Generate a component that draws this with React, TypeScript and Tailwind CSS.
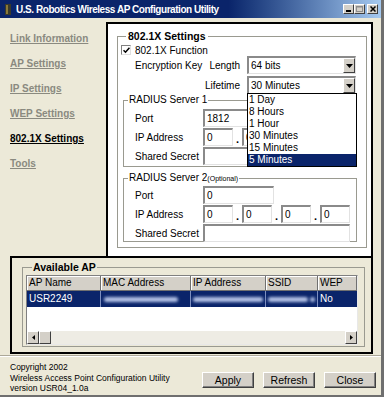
import type { ReactNode } from 'react';

const sans = "font-['Liberation_Sans',Arial,Helvetica,sans-serif]";

const navItems = [
  { label: 'Link Information', active: false },
  { label: 'AP Settings', active: false },
  { label: 'IP Settings', active: false },
  { label: 'WEP Settings', active: false },
  { label: '802.1X Settings', active: true },
  { label: 'Tools', active: false },
];

const lifetimes = ['1 Day', '8 Hours', '1 Hour', '30 Minutes', '15 Minutes', '5 Minutes'];

const columns = [
  { label: 'AP Name', w: 'w-[74px]' },
  { label: 'MAC Address', w: 'w-[90px]' },
  { label: 'IP Address', w: 'w-[75px]' },
  { label: 'SSID', w: 'w-[52px]' },
  { label: 'WEP', w: 'w-[39px]' },
];

function TextBox({ className = '', value = '' }: { className?: string; value?: string }) {
  return (
    <div
      className={`h-[18px] shrink-0 bg-white border-t-2 border-l-2 border-t-[#8a8a8a] border-l-[#8a8a8a] border-r border-b border-r-[#e2e2e2] border-b-[#e2e2e2] pl-[2px] text-[10px] leading-[15px] text-black ${className}`}
    >
      {value}
    </div>
  );
}

function IpBoxes() {
  return (
    <div className="flex">
      {[0, 1, 2, 3].map((i) => (
        <div key={i} className="flex">
          {i > 0 && (
            <span className="flex w-[9px] items-end justify-center text-[11px] font-bold leading-[14px]">.</span>
          )}
          <TextBox className="w-[30px]" value="0" />
        </div>
      ))}
    </div>
  );
}

function Combo({ value }: { value: string }) {
  return (
    <div className="flex h-[18px] w-[109px] bg-white border-t-2 border-l-2 border-t-[#8a8a8a] border-l-[#8a8a8a] border-r border-b border-r-[#e2e2e2] border-b-[#e2e2e2]">
      <span className="flex-1 pl-[2px] text-[10px] leading-[15px]">{value}</span>
      <span className="flex w-[12px] items-center justify-center bg-[#d4d0c8] border border-t-white border-l-white border-r-[#404040] border-b-[#404040]">
        <svg width="7" height="4" viewBox="0 0 7 4">
          <path d="M0 0h7L3.5 4z" fill="#000" />
        </svg>
      </span>
    </div>
  );
}

function Row({ label, children }: { label: string; children: ReactNode }) {
  return (
    <div className="flex h-[18px] items-center">
      <span className="w-[79px] shrink-0 pl-[11px] text-[10px]">{label}</span>
      {children}
    </div>
  );
}

function WinButton({ label }: { label: string }) {
  return (
    <button
      type="button"
      className="h-[16px] w-[52px] bg-[#d4d0c8] border border-t-white border-l-white border-r-[#404040] border-b-[#404040] shadow-[inset_-1px_-1px_0_#808080] text-[10.5px] leading-[13px] text-black"
    >
      {label}
    </button>
  );
}

function TitleButton({ children }: { children: ReactNode }) {
  return (
    <span className="flex h-[10px] w-[11px] items-center justify-center bg-[#d4d0c8] border border-t-white border-l-white border-r-[#404040] border-b-[#404040]">
      {children}
    </span>
  );
}

export default function App() {
  return (
    <div className={`${sans} flex h-[397px] w-[384px] flex-col overflow-hidden bg-[#ece9d8] border-r-[3px] border-b-[2px] border-r-[#6f6f6f] border-b-[#6f6f6f] text-black`}>
      {/* Title bar */}
      <div className="flex h-[18px] shrink-0 items-center bg-linear-to-r from-[#0a246a] via-[#0a246a] via-60% to-[#a6caf0] pl-[5px] pr-[3px]">
        <svg width="6" height="11" viewBox="0 0 6 11">
          <rect x="0" y="0" width="6" height="11" fill="#3a3a2a" />
          <rect x="1" y="1" width="2" height="9" fill="#8a7a3a" />
        </svg>
        <span className="ml-[5px] font-bold text-[10px] tracking-[-0.45px] text-white">
          U.S. Robotics Wireless AP Configuration Utility
        </span>
        <div className="ml-auto flex items-center">
          <TitleButton>
            <svg width="5" height="6" viewBox="0 0 5 6">
              <rect x="0" y="4" width="5" height="2" fill="#000" />
            </svg>
          </TitleButton>
          <TitleButton>
            <svg width="7" height="6" viewBox="0 0 7 6">
              <rect x="0.5" y="0.5" width="6" height="5" fill="none" stroke="#8c8c8c" />
              <rect x="0" y="0" width="7" height="1.5" fill="#8c8c8c" />
            </svg>
          </TitleButton>
          <span className="ml-[2px]">
            <TitleButton>
              <svg width="6" height="6" viewBox="0 0 6 6">
                <path d="M0.5 0.5l5 5M5.5 0.5l-5 5" stroke="#000" strokeWidth="1.5" />
              </svg>
            </TitleButton>
          </span>
        </div>
      </div>

      {/* Body */}
      <div className="flex h-[238px] shrink-0">
        <nav className="flex w-[106px] shrink-0 flex-col gap-[13px] pl-[10px] pt-[15px]">
          {navItems.map((item) => (
            <span
              key={item.label}
              className={`text-[10px] font-bold leading-[12px] underline ${item.active ? 'text-black' : 'text-[#8a8a80]'}`}
            >
              {item.label}
            </span>
          ))}
        </nav>

        <div className="relative mt-[4px] h-[234px] w-[267px] border-2 border-b-0 border-black bg-white">
          <fieldset className="ml-[9px] mt-[6px] h-[218px] w-[250px] border border-[#9a9a90]">
            <legend className="ml-[8px] px-[2px] text-[10.5px] font-bold leading-[12px]">802.1X Settings</legend>

            <div className="mt-[2px] flex h-[12px] items-center pl-[3px]">
              <span className="flex h-[10px] w-[10px] items-center justify-center bg-white border border-t-[#808080] border-l-[#808080] border-r-[#e0e0e0] border-b-[#e0e0e0]">
                <svg width="7" height="7" viewBox="0 0 7 7">
                  <path d="M0.5 3.2l2 2 4-4.5" stroke="#000" strokeWidth="1.6" fill="none" />
                </svg>
              </span>
              <span className="ml-[4px] text-[10px]">802.1X Function</span>
            </div>

            <div className="flex h-[18px] items-center">
              <span className="flex w-[129px] shrink-0 justify-between pl-[17px] pr-[7px] text-[10px]">
                <span>Encryption Key</span>
                <span>Length</span>
              </span>
              <Combo value="64 bits" />
            </div>

            <div className="mt-[2px] flex h-[18px] items-center">
              <span className="w-[129px] shrink-0 pr-[7px] text-right text-[10px]">Lifetime</span>
              <Combo value="30 Minutes" />
            </div>

            <fieldset className="ml-[5px] h-[73px] w-[234px] border border-[#9a9a90]">
              <legend className="ml-[4px] px-[1px] text-[10px] leading-[12px]">RADIUS Server 1</legend>
              <div className="mt-[3px] flex flex-col gap-[1px]">
                <Row label="Port">
                  <TextBox className="w-[71px]" value="1812" />
                </Row>
                <Row label="IP Address">
                  <IpBoxes />
                </Row>
                <Row label="Shared Secret">
                  <TextBox className="w-[147px]" />
                </Row>
              </div>
            </fieldset>

            <fieldset className="ml-[5px] mt-[5px] h-[70px] w-[234px] border border-[#9a9a90]">
              <legend className="ml-[4px] px-[1px] text-[10px] leading-[12px]">
                RADIUS Server 2<span className="text-[7px]">(Optional)</span>
              </legend>
              <div className="mt-[1px] flex flex-col gap-[1px]">
                <Row label="Port">
                  <TextBox className="w-[71px]" value="0" />
                </Row>
                <Row label="IP Address">
                  <IpBoxes />
                </Row>
                <Row label="Shared Secret">
                  <TextBox className="w-[147px]" />
                </Row>
              </div>
            </fieldset>
          </fieldset>

          {/* Open lifetime dropdown */}
          <ul className="absolute left-[139px] top-[69px] w-[110px] border border-black bg-white">
            {lifetimes.map((t) => (
              <li
                key={t}
                className={`h-[12px] pl-[1px] text-[10px] leading-[12px] ${t === '5 Minutes' ? 'bg-[#0a246a] text-white' : 'text-black'}`}
              >
                {t}
              </li>
            ))}
          </ul>
        </div>
      </div>

      {/* Available AP */}
      <div className="ml-[10px] h-[98px] w-[363px] shrink-0 border-2 border-black">
        <fieldset className="ml-[10px] mt-[3px] h-[86px] w-[343px] border border-[#9a9a90]">
          <legend className="ml-[9px] px-[1px] text-[10.5px] font-bold leading-[12px]">Available AP</legend>
          <div className="ml-[3px] mt-[2px] flex h-[70px] w-[332px] flex-col border border-t-[#808080] border-l-[#808080] border-r-[#e8e8e8] border-b-[#e8e8e8] bg-white">
            <div className="flex h-[15px] shrink-0">
              {columns.map((c) => (
                <span
                  key={c.label}
                  className={`${c.w} shrink-0 bg-[#d4d0c8] border-r border-b border-r-[#707070] border-b-[#707070] shadow-[inset_1px_1px_0_#fff] pl-[2px] text-[10px] leading-[14px]`}
                >
                  {c.label}
                </span>
              ))}
              <span className="flex-1 bg-[#d4d0c8]" />
            </div>
            <div className="flex h-[16px] shrink-0 items-center bg-[#0a246a] text-[10px] text-white">
              <span className="w-[74px] shrink-0 border-r border-[#7d8fc0] pl-[2px] leading-[16px]">USR2249</span>
              <span className="flex h-full w-[90px] shrink-0 items-center border-r border-[#7d8fc0] pl-[3px]">
                <span className="h-[5px] w-[74px] rounded-full bg-[#b4c2e6] blur-[1.5px]" />
              </span>
              <span className="flex h-full w-[75px] shrink-0 items-center border-r border-[#7d8fc0] pl-[2px]">
                <span className="h-[5px] w-[70px] rounded-full bg-[#b4c2e6] blur-[1.5px]" />
              </span>
              <span className="flex h-full w-[52px] shrink-0 items-center border-r border-[#7d8fc0] pl-[2px]">
                <span className="h-[5px] w-[40px] rounded-full bg-[#b4c2e6] blur-[1.5px]" />
                <span className="ml-[2px] h-[5px] w-[5px] rounded-full bg-[#b4c2e6] blur-[1.5px]" />
              </span>
              <span className="pl-[2px] leading-[16px]">No</span>
            </div>
            <div className="flex-1" />
            <div className="flex h-[13px] shrink-0 bg-[#eeece4]">
              <span className="flex w-[12px] items-center justify-center bg-[#d4d0c8] border border-t-white border-l-white border-r-[#404040] border-b-[#404040]">
                <svg width="3" height="5" viewBox="0 0 3 5">
                  <path d="M3 0v5L0 2.5z" fill="#000" />
                </svg>
              </span>
              <span className="w-[12px] bg-[#d4d0c8] border border-t-white border-l-white border-r-[#404040] border-b-[#404040]" />
              <span className="flex-1" />
              <span className="flex w-[12px] items-center justify-center bg-[#d4d0c8] border border-t-white border-l-white border-r-[#404040] border-b-[#404040]">
                <svg width="3" height="5" viewBox="0 0 3 5">
                  <path d="M0 0v5L3 2.5z" fill="#000" />
                </svg>
              </span>
            </div>
          </div>
        </fieldset>
      </div>

      {/* Footer */}
      <div className="mt-[1px] h-[2px] shrink-0 border-t border-b border-t-[#aca899] border-b-white" />
      <div className="flex flex-1 pl-[10px] pr-[5px] pt-[5px]">
        <div className="text-[8.5px] leading-[10.5px]">
          <div>Copyright 2002</div>
          <div>Wireless Access Point Configuration Utility</div>
          <div>version USR04_1.0a</div>
        </div>
        <div className="ml-auto mt-[10px] flex gap-[9px] self-start">
          <WinButton label="Apply" />
          <WinButton label="Refresh" />
          <WinButton label="Close" />
        </div>
      </div>
    </div>
  );
}
